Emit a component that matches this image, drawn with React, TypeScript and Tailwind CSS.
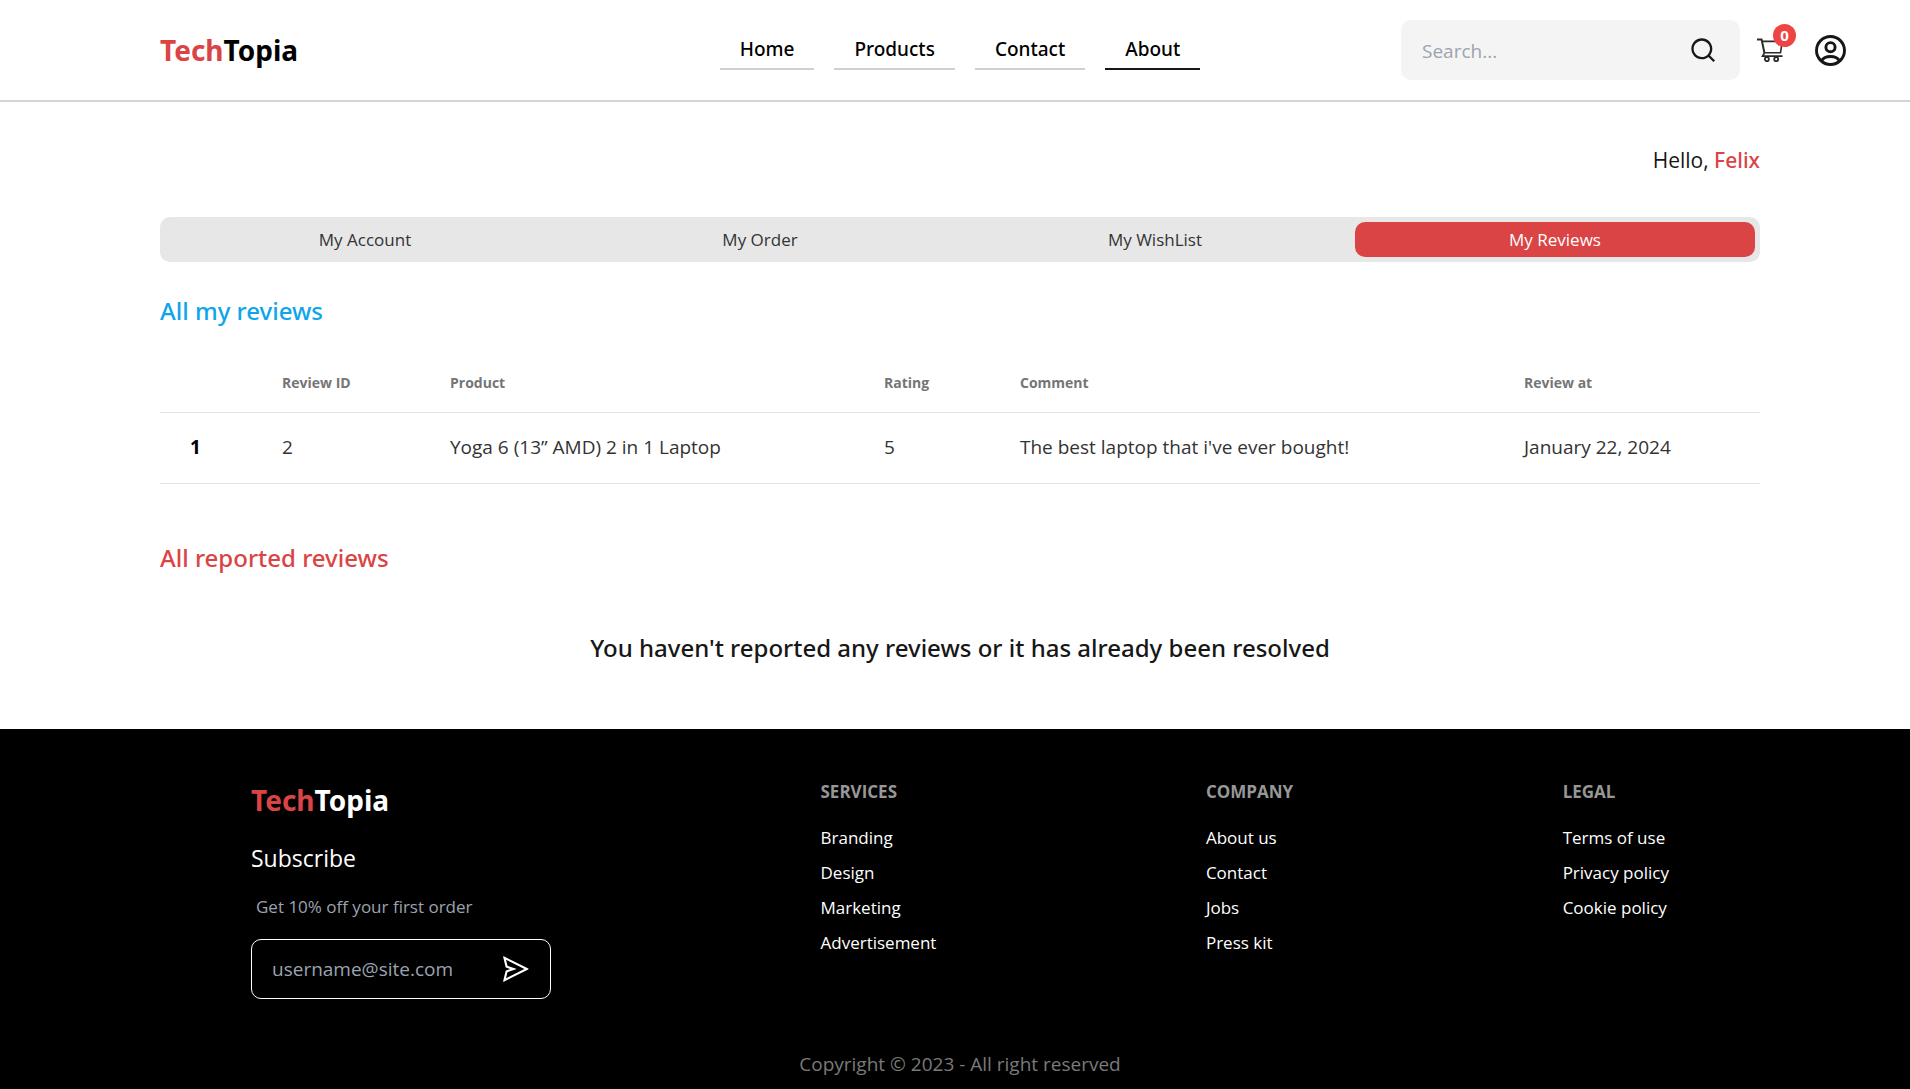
import { AiOutlineSend } from "react-icons/ai";
import { RiSearchLine } from "react-icons/ri";

const navLinks = [
  { label: "Home", active: false },
  { label: "Products", active: false },
  { label: "Contact", active: false },
  { label: "About", active: true },
];

const tabs = [
  { label: "My Account", active: false },
  { label: "My Order", active: false },
  { label: "My WishList", active: false },
  { label: "My Reviews", active: true },
];

const reviews = [
  {
    id: 2,
    product: "Yoga 6 (13” AMD) 2 in 1 Laptop",
    rating: 5,
    comment: "The best laptop that i've ever bought!",
    date: "January 22, 2024",
  },
];

const footerColumns = [
  { title: "SERVICES", links: ["Branding", "Design", "Marketing", "Advertisement"] },
  { title: "COMPANY", links: ["About us", "Contact", "Jobs", "Press kit"] },
  { title: "LEGAL", links: ["Terms of use", "Privacy policy", "Cookie policy"] },
];

function Logo({ className }: { className: string }) {
  return (
    <a href="#" className={'font-["Noto_Sans",sans-serif] text-[28px] leading-[42px] font-bold ' + className}>
      <span className="text-[#db4444]">Tech</span>Topia
    </a>
  );
}

function CartIcon() {
  return (
    <svg viewBox="0 0 26 24" className="h-6 w-[26px]" fill="none" stroke="#2b2b2b" strokeWidth="1.6" aria-hidden="true">
      <path d="M0 1.6h4.6l2.8 13.2" strokeWidth="2" />
      <path d="M5.2 3.4h20l-1.7 11.4H7.4" />
      <path d="M7.4 14.8 5.6 18.2h20" strokeWidth="1.8" />
      <circle cx="9.9" cy="21.2" r="2" strokeWidth="1.8" />
      <circle cx="19.2" cy="21.2" r="2" strokeWidth="1.8" />
    </svg>
  );
}

function UserIcon() {
  return (
    <svg viewBox="0 0 31 31" className="size-[31px]" fill="none" stroke="#171717" strokeWidth="2.9" aria-hidden="true">
      <circle cx="15.5" cy="15.5" r="14" />
      <circle cx="15.5" cy="12.2" r="4.6" />
      <path d="M6.6 25.6c1.8-2.9 5.2-4.1 8.9-4.1s7.1 1.2 8.9 4.1" />
    </svg>
  );
}

function Header() {
  return (
    <header className="grid h-[102px] grid-cols-[1fr_auto_1fr] items-center border-b-2 border-[#d1d5db] pr-16 pl-[74px]">
      <Logo className="ml-[86px] text-black" />
      <nav className="flex gap-5">
        {navLinks.map((link) => (
          <a
            key={link.label}
            href="#"
            className={
              'border-b-2 px-5 font-["Noto_Sans",sans-serif] text-[19px] leading-[38px] font-medium text-black ' +
              (link.active ? "border-[#171717]" : "border-[#d0d0d0]")
            }
          >
            {link.label}
          </a>
        ))}
      </nav>
      <div className="flex items-center justify-end">
        <form className="flex h-[60px] w-[339px] items-center rounded-[10px] bg-[#f4f4f4] pr-[23px] pl-[21px]">
          <input
            type="text"
            aria-label="Search"
            placeholder="Search..."
            className="min-w-0 flex-1 pt-0.5 text-[19px] outline-none placeholder:text-[#9ca3af]"
          />
          <button type="button" aria-label="Search" className="text-[#171717]">
            <RiSearchLine className="size-7" />
          </button>
        </form>
        <button type="button" aria-label="Cart" className="relative ml-[17px]">
          <CartIcon />
          <span className="absolute -top-3.5 left-4 flex size-[23px] items-center justify-center rounded-full bg-[#ef4444] text-[15px] font-bold text-white">
            0
          </span>
        </button>
        <button type="button" aria-label="Account" className="ml-8">
          <UserIcon />
        </button>
      </div>
    </header>
  );
}

function ReviewsTable() {
  return (
    <table className="mt-6 w-full table-fixed text-left">
      <colgroup>
        <col className="w-[92px]" />
        <col className="w-[168px]" />
        <col className="w-[434px]" />
        <col className="w-[136px]" />
        <col className="w-[504px]" />
        <col className="w-[266px]" />
      </colgroup>
      <thead>
        <tr className="h-[59px] border-b border-[#e5e5e5] text-[14px] text-[#757575]">
          <td />
          {["Review ID", "Product", "Rating", "Comment", "Review at"].map((h) => (
            <th key={h} scope="col" className="px-[30px] font-bold whitespace-nowrap">
              {h}
            </th>
          ))}
        </tr>
      </thead>
      <tbody>
        {reviews.map((r, i) => (
          <tr key={r.id} className="h-[71px] border-b border-[#e5e5e5] text-[19px] whitespace-nowrap text-[#333333]">
            <th scope="row" className="px-[30px] font-bold text-black">{i + 1}</th>
            <td className="px-[30px]">{r.id}</td>
            <td className="px-[30px]">{r.product}</td>
            <td className="px-[30px]">{r.rating}</td>
            <td className="px-[30px]">{r.comment}</td>
            <td className="px-[30px]">{r.date}</td>
          </tr>
        ))}
      </tbody>
    </table>
  );
}

function Footer() {
  return (
    <footer className="bg-black pt-[50px] pb-3 text-white">
      <div className="flex justify-between pr-[241px] pl-[251px]">
        <div className="flex w-[300px] flex-col">
          <Logo className="text-white" />
          <h2 className="mt-5 text-[23px] leading-[34px]">Subscribe</h2>
          <label htmlFor="email" className="mt-5 ml-[5px] text-[17px] leading-6 text-[#9ca3af]">
            Get 10% off your first order
          </label>
          <form className="mt-5 flex h-[60px] items-center rounded-[10px] border border-white pr-[19px] pl-5">
            <input
              id="email"
              type="email"
              placeholder="username@site.com"
              className="min-w-0 flex-1 pt-0.5 text-[19px] outline-none placeholder:text-[#9ca3af]"
            />
            <button type="button" aria-label="Subscribe">
              <AiOutlineSend className="size-[30px]" />
            </button>
          </form>
        </div>
        {footerColumns.map((column) => (
          <nav key={column.title} aria-label={column.title}>
            <h3 className="mb-[15px] text-[17px] leading-[26px] font-bold text-[#979797]">{column.title}</h3>
            <ul>
              {column.links.map((link) => (
                <li key={link} className="text-[17px] leading-[35px]">
                  <a href="#">{link}</a>
                </li>
              ))}
            </ul>
          </nav>
        ))}
      </div>
      <p className="mt-[51px] pl-2.5 text-center text-[19px] leading-7 text-[#7a7a7a]">
        Copyright © 2023 - All right reserved
      </p>
    </footer>
  );
}

export default function App() {
  return (
    <div className='min-h-screen bg-white font-["Open_Sans","Noto_Sans",sans-serif] text-[#171717]'>
      <Header />
      <main className="pt-[43px] pr-[150px] pb-[63px] pl-40">
        <p className="text-right text-[21px] leading-[30px]">
          Hello, <span className='font-["Noto_Sans",sans-serif] font-medium text-[#db4444]'>Felix</span>
        </p>
        <div
          role="tablist"
          className="mt-[42px] grid grid-cols-[39fr_39fr_39fr_40fr] gap-[5px] rounded-[10px] bg-[#e7e7e7] p-[5px] pl-2.5"
        >
          {tabs.map((tab) => (
            <button
              key={tab.label}
              type="button"
              role="tab"
              aria-selected={tab.active}
              className={
                "h-[35px] rounded-[10px] text-[17px] " +
                (tab.active ? "bg-[#db4444] text-white" : "text-[#333333]")
              }
            >
              {tab.label}
            </button>
          ))}
        </div>
        <h2 className='mt-[31px] font-["Noto_Sans",sans-serif] text-[24px] leading-9 font-medium text-[#0ea5e9]'>
          All my reviews
        </h2>
        <ReviewsTable />
        <h2 className='mt-14 font-["Noto_Sans",sans-serif] text-[24px] leading-9 font-medium text-[#db4444]'>
          All reported reviews
        </h2>
        <p className='mt-[54px] text-center font-["Noto_Sans",sans-serif] text-[24px] leading-9 font-medium'>
          You haven't reported any reviews or it has already been resolved
        </p>
      </main>
      <Footer />
    </div>
  );
}
